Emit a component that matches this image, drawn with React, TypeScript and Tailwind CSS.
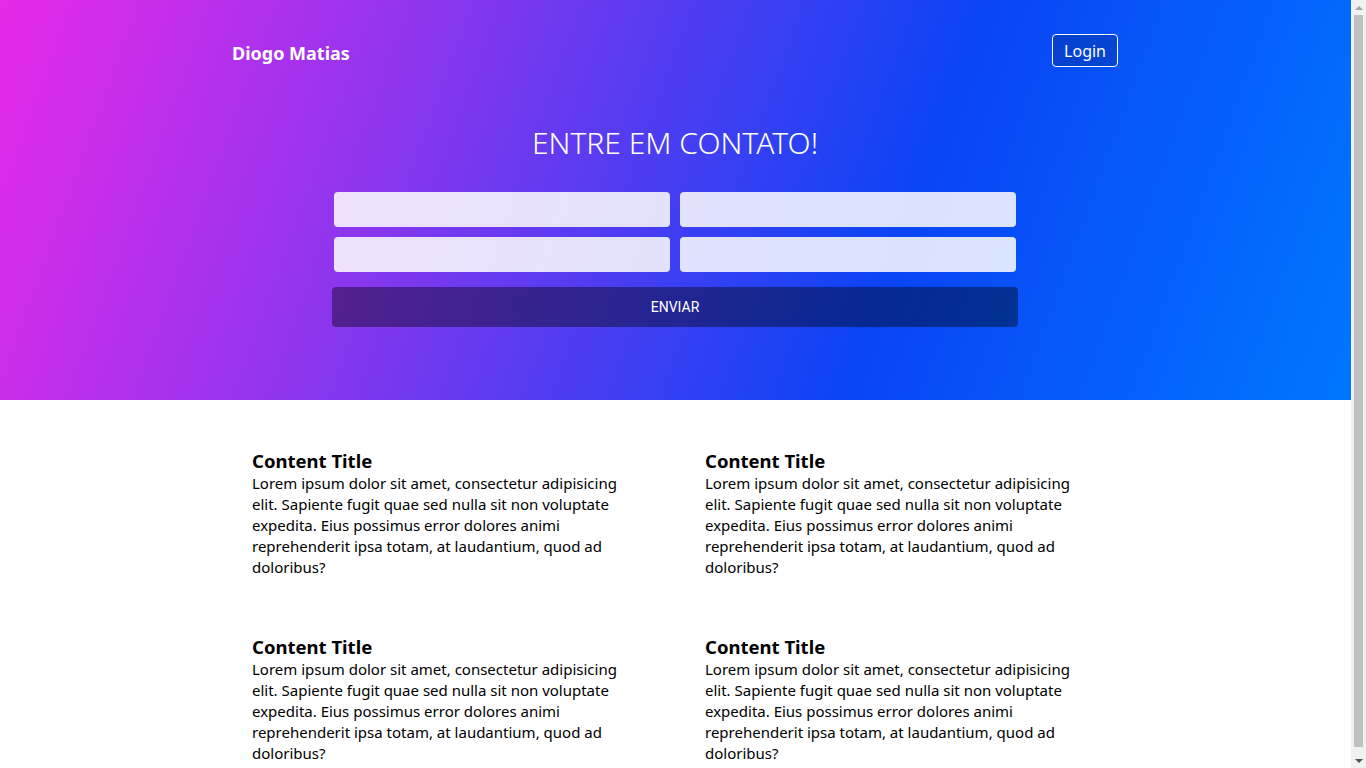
import React from 'react';

const lorem =
  'Lorem ipsum dolor sit amet, consectetur adipisicing elit. Sapiente fugit quae sed nulla sit non voluptate expedita. Eius possimus error dolores animi reprehenderit ipsa totam, at laudantium, quod ad doloribus?';

const ContentItem = () => (
  <div>
    <h2 className="text-[18.5px] leading-[24px] font-bold text-black">Content Title</h2>
    <p className="text-[15px] leading-[21px] text-black">{lorem}</p>
  </div>
);

const App = () => {
  return (
    <div className="min-h-[812px] bg-white pr-[15px] font-['Noto_Sans','Open_Sans',sans-serif]">
      {/* Hero */}
      <section className="h-[400px] pt-[34px] bg-[linear-gradient(110deg,#e829e9_0%,#8a36ee_30%,#0a44f5_66%,#0077ff_100%)]">
        <div className="mx-auto w-[887px] pr-[1px]">
          <nav className="flex h-[33px] items-center justify-between">
            <span className="pt-[6px] text-[18px] font-bold text-white">Diogo Matias</span>
            <button className="h-[33px] px-[11px] rounded-[4px] border border-white bg-black/15 text-[16px] text-white">
              Login
            </button>
          </nav>

          <h1 className="mt-[56px] text-center text-[30px] leading-[40px] font-light text-white">
            ENTRE EM CONTATO!
          </h1>

          <form className="mx-auto mt-[29px] w-[686px]" onSubmit={(e) => e.preventDefault()}>
            <div className="grid grid-cols-2 gap-[10px] px-[2px]">
              <input className="h-[35px] rounded-[4px] bg-white/85 outline-none" />
              <input className="h-[35px] rounded-[4px] bg-white/85 outline-none" />
              <input className="h-[35px] rounded-[4px] bg-white/85 outline-none" />
              <input className="h-[35px] rounded-[4px] bg-white/85 outline-none" />
            </div>
            <button
              type="submit"
              className="mt-[15px] h-[40px] w-full rounded-[4px] bg-black/40 font-['Roboto',sans-serif] text-[14px] text-white"
            >
              ENVIAR
            </button>
          </form>
        </div>
      </section>

      {/* Content */}
      <section className="mx-auto w-[887px] pl-[20px] pr-[21px] pt-[49px] pb-[40px]">
        <div className="grid grid-cols-2 gap-x-[60px] gap-y-[57px]">
          <ContentItem />
          <ContentItem />
          <ContentItem />
          <ContentItem />
        </div>
      </section>

      {/* Browser scrollbar */}
      <div className="fixed right-0 top-0 flex h-screen w-[15px] flex-col items-center bg-[#f1f1f1]">
        <div className="flex h-[15px] w-full items-center justify-center">
          <div className="h-0 w-0 border-x-[4px] border-b-[4px] border-x-transparent border-b-[#a3a3a3]" />
        </div>
        <div className="mb-[6px] w-[9px] flex-1 bg-[#c1c1c1]" />
        <div className="flex h-[15px] w-full items-center justify-center">
          <div className="h-0 w-0 border-x-[4px] border-t-[4px] border-x-transparent border-t-[#505050]" />
        </div>
      </div>
    </div>
  );
};

export default App;
